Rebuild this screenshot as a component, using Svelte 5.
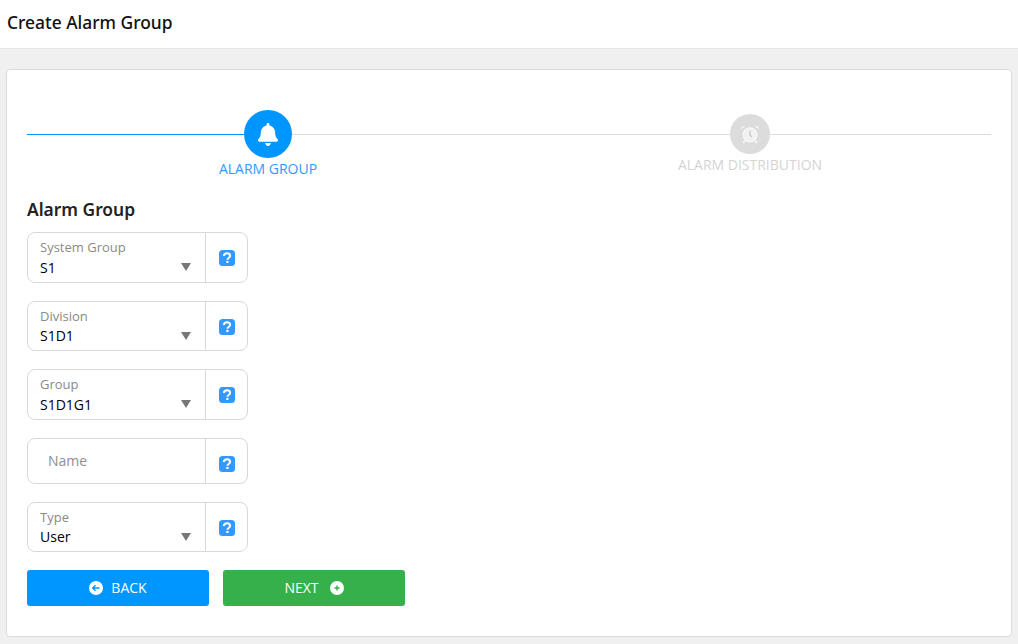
<script lang="ts">
type Field = { label?: string; value?: string; placeholder?: string; kind: "select" | "input" };

const fields: Field[] = [
	{ kind: "select", label: "System Group", value: "S1" },
	{ kind: "select", label: "Division", value: "S1D1" },
	{ kind: "select", label: "Group", value: "S1D1G1" },
	{ kind: "input", placeholder: "Name" },
	{ kind: "select", label: "Type", value: "User" },
];
</script>

<header class="topbar">
	<h1>Create Alarm Group</h1>
</header>

<main class="page">
	<section class="card">
		<div class="stepper">
			<div class="step active">
				<span class="dot">
					<svg width="20" height="23" viewBox="0 0 448 512" fill="currentColor" aria-hidden="true">
						<path d="M224 512c35.300 0 63.900-28.700 63.900-64H160.100c0 35.300 28.600 64 63.900 64zm215.400-149.700c-19.300-20.800-55.500-52-55.500-154.300 0-77.700-54.500-139.900-127.900-155.200V32c0-17.700-14.300-32-32-32s-32 14.300-32 32v20.800C118.600 68.100 64.100 130.300 64.100 208c0 102.300-36.200 133.500-55.500 154.300-6 6.400-8.700 14.100-8.600 21.700.1 16.400 13 32 32.100 32h383.800c19.100 0 32-15.600 32.100-32 .1-7.600-2.600-15.300-8.600-21.700z"/>
					</svg>
				</span>
				<span class="step-label">ALARM GROUP</span>
			</div>
			<div class="step">
				<span class="dot">
					<svg width="20" height="20" viewBox="0 0 24 24" aria-hidden="true">
						<circle cx="12" cy="13" r="8" fill="none" stroke="currentColor" stroke-width="2"/>
						<circle cx="12" cy="13" r="7" fill="#f2f2f2"/>
						<path d="M1.500 6.500 6 2.200c-2-.8-5 1.500-4.500 4.300zM22.500 6.500 18 2.200c2-.8 5 1.500 4.500 4.300z" fill="currentColor"/>
						<path d="M12 8V13.500l2.500 2" fill="none" stroke="#c4c8cc" stroke-width="1.600"/>
						<path d="M5.500 20 4 23M18.500 20 20 23" stroke="currentColor" stroke-width="2"/>
					</svg>
				</span>
				<span class="step-label">ALARM DISTRIBUTION</span>
			</div>
		</div>

		<h2>Alarm Group</h2>

		<div class="fields">
			{#each fields as field}
				<div class="field" class:plain={field.kind === "input"}>
					<div class="control">
						{#if field.kind === "select"}
							<span class="label">{field.label}</span>
							<span class="value">{field.value}</span>
							<span class="caret"></span>
						{:else}
							<span class="placeholder">{field.placeholder}</span>
						{/if}
					</div>
					<div class="help">
						<svg width="16" height="16" viewBox="0 0 16 16" aria-hidden="true">
							<rect width="16" height="16" rx="3.500" fill="#3399ff"/>
							<path d="M4.900 6C5 4.200 6.300 3.200 8.100 3.200c1.800 0 3 1 3 2.500 0 1.100-.6 1.700-1.500 2.300-.8.500-1.100.9-1.100 1.800" fill="none" stroke="#fff" stroke-width="2"/>
							<rect x="7.300" y="10.900" width="2.200" height="2.100" fill="#fff"/>
						</svg>
					</div>
				</div>
			{/each}
		</div>

		<div class="actions">
			<button type="button" class="btn back">
				<svg width="14" height="14" viewBox="0 0 14 14" aria-hidden="true">
					<circle cx="7" cy="7" r="7" fill="#fff"/>
					<path d="M10.500 7H4M6.500 4.200 3.700 7l2.800 2.800" fill="none" stroke="#0096ff" stroke-width="1.400"/>
				</svg>
				BACK
			</button>
			<button type="button" class="btn next">
				NEXT
				<svg width="14" height="14" viewBox="0 0 14 14" aria-hidden="true">
					<circle cx="7" cy="7" r="7" fill="#fff"/>
					<path d="M7 4.500v5M4.500 7h5" fill="none" stroke="#35b04a" stroke-width="1.400"/>
				</svg>
			</button>
		</div>
	</section>
</main>

<style>
	:global(body) {
		background: #f0f0f0;
		font-family: "Open Sans", "Noto Sans", sans-serif;
	}

	.topbar {
		height: 49px;
		box-sizing: border-box;
		padding: 0 7px 5px;
		display: flex;
		align-items: center;
		background: #fff;
		border-bottom: 1px solid #e8e8e8;
	}

	h1 {
		margin: 0;
		font-family: "Noto Sans", sans-serif;
		font-size: 17.400px;
		font-weight: 500;
		line-height: 24px;
		color: #111;
	}

	.page {
		padding: 20px 6px 7px;
	}

	.card {
		box-sizing: border-box;
		height: 568px;
		padding: 40px 20px 0;
		background: #fff;
		border: 1px solid #dcdcdc;
		border-radius: 4px;
	}

	.stepper {
		position: relative;
		display: grid;
		grid-template-columns: 1fr 1fr;
		height: 88px;
	}

	.stepper::before {
		content: "";
		position: absolute;
		left: 0;
		right: 0;
		top: 24px;
		height: 1px;
		background: linear-gradient(to right, #0096ff 241px, #dcdcdc 241px);
	}

	.step {
		position: relative;
		display: flex;
		flex-direction: column;
		align-items: center;
		color: #d4d4d4;
	}

	.dot {
		width: 40px;
		height: 40px;
		margin-top: 4px;
		border-radius: 50%;
		background: #dcdcdc;
		color: #f8f8f8;
		display: flex;
		align-items: center;
		justify-content: center;
	}

	.step-label {
		margin-top: 1px;
		font-size: 14px;
		line-height: 19px;
	}

	.active {
		color: #3399ff;
	}

	.active .dot {
		width: 48px;
		height: 48px;
		margin-top: 0;
		background: #0096ff;
		color: #fff;
	}

	h2 {
		margin: 0 0 12px;
		font-family: "Noto Sans", sans-serif;
		font-size: 17.400px;
		font-weight: 600;
		line-height: 22px;
		color: #222;
	}

	.fields {
		display: flex;
		flex-direction: column;
		gap: 18px;
		width: 221px;
	}

	.field {
		display: flex;
		height: 51px;
		box-sizing: border-box;
		border: 1px solid #d9d9d9;
		border-radius: 8px;
	}

	.field:nth-child(2),
	.field:last-child {
		height: 50px;
	}

	.field:nth-child(2) .value,
	.field:last-child .value {
		margin-top: 1px;
	}

	.field.plain {
		height: 46px;
	}

	.control {
		position: relative;
		flex: 1;
		padding: 5px 12px 0;
		display: flex;
		flex-direction: column;
		border-right: 1px solid #d9d9d9;
	}

	.label {
		font-size: 13px;
		line-height: 18px;
		color: #8a8a8a;
	}

	.value {
		margin-top: 2px;
		font-size: 14px;
		line-height: 20px;
		color: #000;
	}

	.placeholder {
		padding: 7px 8px 0;
		font-size: 14px;
		line-height: 20px;
		color: #8f8f8f;
	}

	.caret {
		position: absolute;
		right: 14px;
		top: 30px;
		border-left: 5.500px solid transparent;
		border-right: 5.500px solid transparent;
		border-top: 8px solid #777;
	}

	.help {
		width: 41px;
		display: flex;
		align-items: center;
		justify-content: center;
		padding-top: 1px;
	}

	.plain .help {
		padding: 6px 0 0;
	}

	.actions {
		display: flex;
		gap: 14px;
		margin-top: 18px;
	}

	.btn {
		width: 182px;
		height: 36px;
		padding: 0 0 2px;
		display: flex;
		align-items: center;
		justify-content: center;
		gap: 8px;
		border: 0;
		border-radius: 3px;
		font: inherit;
		font-size: 14px;
		color: #fff;
	}

	.btn svg {
		margin-top: 2px;
	}

	.back {
		background: #0096ff;
	}

	.next {
		background: #35b04a;
		gap: 11px;
	}
</style>
